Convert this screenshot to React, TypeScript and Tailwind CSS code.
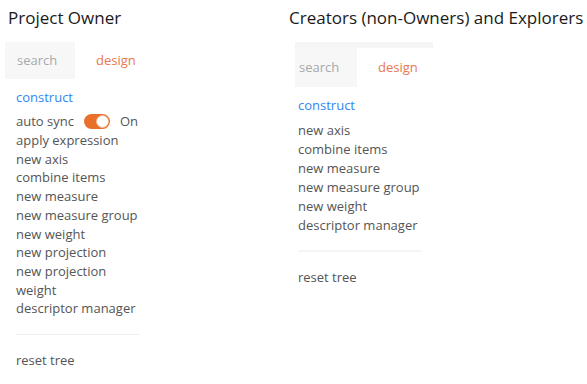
const ownerItems = [
  "apply expression",
  "new axis",
  "combine items",
  "new measure",
  "new measure group",
  "new weight",
  "new projection",
  "new projection",
  "weight",
  "descriptor manager",
];

const creatorItems = [
  "new axis",
  "combine items",
  "new measure",
  "new measure group",
  "new weight",
  "descriptor manager",
];

function Toggle() {
  return (
    <span className="inline-flex items-center w-[26px] h-[15px] rounded-full bg-[#e8702a] p-[1px] justify-end">
      <span className="w-[13px] h-[13px] rounded-full bg-white border border-[#f3b891]" />
    </span>
  );
}

function Tabs({ strip }: { strip?: boolean }) {
  return (
    <div className={strip ? "w-[138px] pt-[6px] bg-[#f5f5f5]" : ""}>
      <div className="flex items-center bg-white">
        <div
          className={
            "flex items-center bg-[#f7f7f7] text-[#a8a8a8] " +
            (strip ? "w-[62px] h-[39px] pl-[4px]" : "w-[70px] h-[37px] pl-[12px]")
          }
        >
          search
        </div>
        <div className="text-[#e8784f] pl-[21px]">design</div>
      </div>
    </div>
  );
}

export default function App() {
  return (
    <div
      className="w-[587px] h-[384px] bg-white relative flex text-[13px] text-[#555555]"
      style={{ fontFamily: '"Segoe UI", "Open Sans", sans-serif' }}
    >
      {/* OWNER */}
      <div className="w-[289px] pl-[5px]">
        <h2 className="text-[17px] text-[#1a1a1a] pl-[3px] pt-[7px] leading-[21px]">
          Project Owner
        </h2>
        <div className="mt-[14px]">
          <Tabs />
        </div>
        <div className="pl-[11px] mt-[9px] w-[135px]">
          <div className="text-[#2f86f6] leading-[19px]">construct</div>
          <div className="flex items-center gap-[10px] mt-[5px] leading-[19px]">
            <span>auto sync</span>
            <Toggle />
            <span>On</span>
          </div>
          {ownerItems.map((item, i) => (
            <div key={i} className="leading-[18.7px]">
              {item}
            </div>
          ))}
          <div className="border-t border-[#f0f0f0] mt-[16px] mb-[16px]" />
          <div>reset tree</div>
        </div>
      </div>

      {/* CREATORS */}
      <div className="flex-1">
        <h2 className="text-[17px] text-[#1a1a1a] pt-[7px] leading-[21px]">
          Creators (non-Owners) and Explorers
        </h2>
        <div className="ml-[6px] mt-[14px]">
          <Tabs strip />
        </div>
        <div className="pl-[9px] mt-[9px] w-[132px]">
          <div className="text-[#2f86f6] leading-[19px] mb-[6px]">construct</div>
          {creatorItems.map((item, i) => (
            <div key={i} className="leading-[19px]">
              {item}
            </div>
          ))}
          <div className="border-t-2 border-[#f5f5f5] mt-[15px] mb-[16px]" />
          <div>reset tree</div>
        </div>
      </div>
    </div>
  );
}
